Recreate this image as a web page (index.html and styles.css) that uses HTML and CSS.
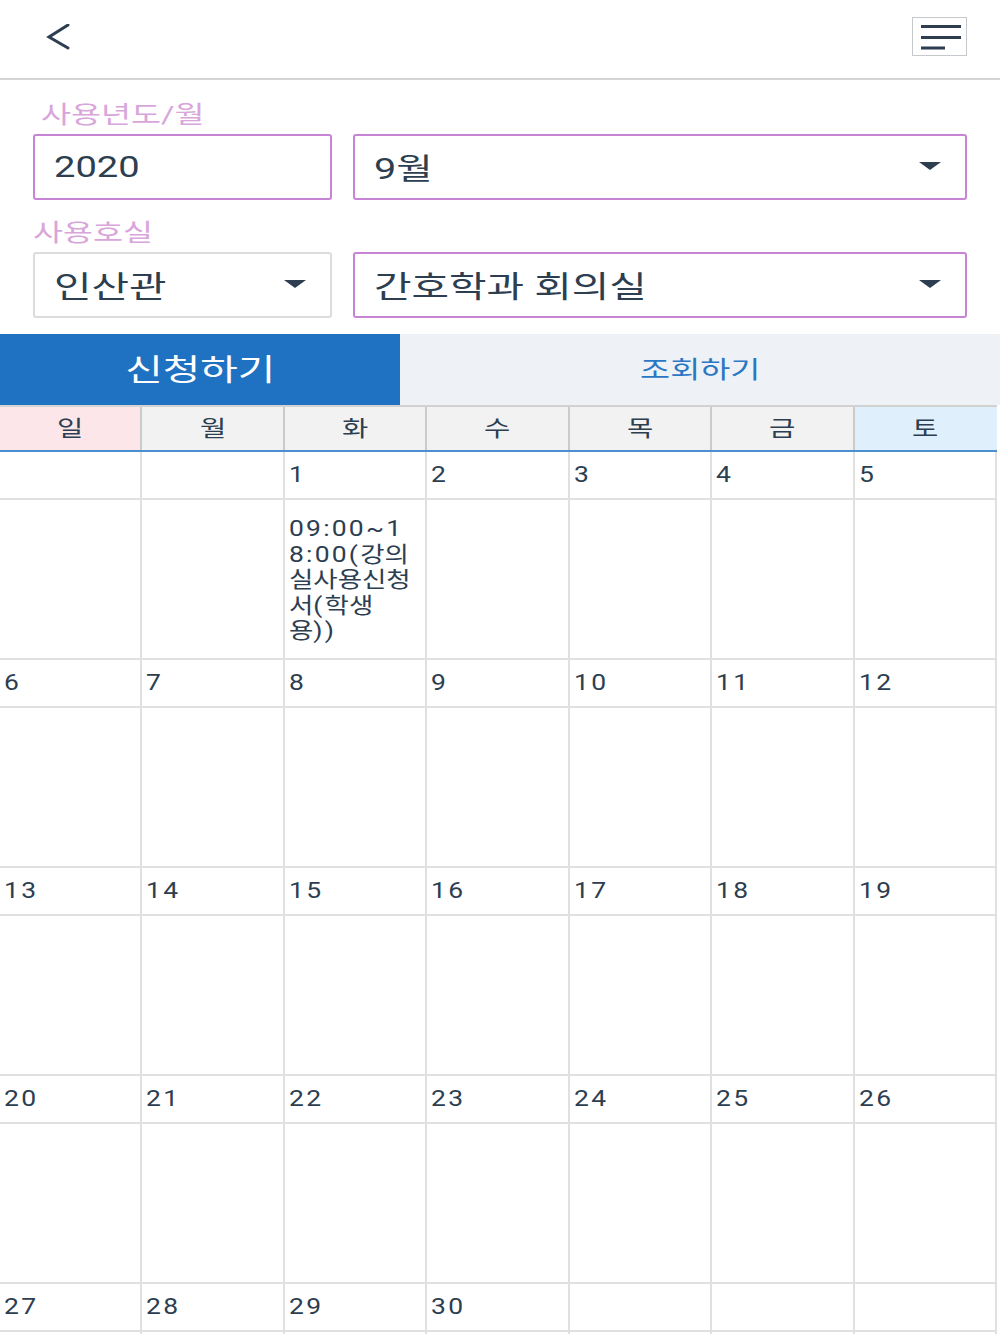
FILE: index.html
```html
<!DOCTYPE html>
<html lang="ko">
<head>
<meta charset="utf-8">
<title>강의실 사용신청</title>
<link rel="stylesheet" href="styles.css">
</head>
<body>
<header class="topbar">
  <button class="back" aria-label="뒤로">
    <svg width="26" height="30" viewBox="0 0 26 30"><path d="M22 1 L3 13 L22 24" fill="none" stroke="#2c3e50" stroke-width="3" stroke-linecap="round" stroke-linejoin="miter"/></svg>
  </button>
  <button class="menu" aria-label="메뉴">
    <svg width="52" height="36" viewBox="0 0 52 36"><path d="M7 7.5 H47 M7 18.5 H47 M7 29 H31" stroke="#2c3e50" stroke-width="3.2"/></svg>
  </button>
</header>

<section class="form">
  <div class="label label-first"><span class="wide">사용년도/월</span></div>
  <div class="row">
    <div class="field purple"><span class="wide num">2020</span></div>
    <div class="field purple select"><span class="wide mixed">9월</span><span class="caret"></span></div>
  </div>
  <div class="label"><span class="wide">사용호실</span></div>
  <div class="row">
    <div class="field grey select"><span class="wide">인산관</span><span class="caret"></span></div>
    <div class="field purple select"><span class="wide">간호학과 회의실</span><span class="caret"></span></div>
  </div>
</section>

<nav class="tabs">
  <div class="tab active"><span class="wide center">신청하기</span></div>
  <div class="tab"><span class="wide center">조회하기</span></div>
</nav>

<div class="calendar">
  <div class="days">
    <div class="day sun"><span class="wide center">일</span></div>
    <div class="day"><span class="wide center">월</span></div>
    <div class="day"><span class="wide center">화</span></div>
    <div class="day"><span class="wide center">수</span></div>
    <div class="day"><span class="wide center">목</span></div>
    <div class="day"><span class="wide center">금</span></div>
    <div class="day sat"><span class="wide center">토</span></div>
  </div>

  <div class="week">
    <div class="date"></div><div class="date"></div><div class="date"><span class="wide num">1</span></div><div class="date"><span class="wide num">2</span></div><div class="date"><span class="wide num">3</span></div><div class="date"><span class="wide num">4</span></div><div class="date"><span class="wide num">5</span></div>
    <div class="slot"></div><div class="slot"></div>
    <div class="slot"><div class="event"><span class="lat">09:00~1</span><br><span class="lat">8:00(</span>강의<br>실사용신청<br>서<span class="lat">(</span>학생<br>용<span class="lat">))</span></div></div>
    <div class="slot"></div><div class="slot"></div><div class="slot"></div><div class="slot"></div>
  </div>

  <div class="week">
    <div class="date"><span class="wide num">6</span></div><div class="date"><span class="wide num">7</span></div><div class="date"><span class="wide num">8</span></div><div class="date"><span class="wide num">9</span></div><div class="date"><span class="wide num">10</span></div><div class="date"><span class="wide num">11</span></div><div class="date"><span class="wide num">12</span></div>
    <div class="slot"></div><div class="slot"></div><div class="slot"></div><div class="slot"></div><div class="slot"></div><div class="slot"></div><div class="slot"></div>
  </div>

  <div class="week">
    <div class="date"><span class="wide num">13</span></div><div class="date"><span class="wide num">14</span></div><div class="date"><span class="wide num">15</span></div><div class="date"><span class="wide num">16</span></div><div class="date"><span class="wide num">17</span></div><div class="date"><span class="wide num">18</span></div><div class="date"><span class="wide num">19</span></div>
    <div class="slot"></div><div class="slot"></div><div class="slot"></div><div class="slot"></div><div class="slot"></div><div class="slot"></div><div class="slot"></div>
  </div>

  <div class="week">
    <div class="date"><span class="wide num">20</span></div><div class="date"><span class="wide num">21</span></div><div class="date"><span class="wide num">22</span></div><div class="date"><span class="wide num">23</span></div><div class="date"><span class="wide num">24</span></div><div class="date"><span class="wide num">25</span></div><div class="date"><span class="wide num">26</span></div>
    <div class="slot"></div><div class="slot"></div><div class="slot"></div><div class="slot"></div><div class="slot"></div><div class="slot"></div><div class="slot"></div>
  </div>

  <div class="week">
    <div class="date"><span class="wide num">27</span></div><div class="date"><span class="wide num">28</span></div><div class="date"><span class="wide num">29</span></div><div class="date"><span class="wide num">30</span></div><div class="date"></div><div class="date"></div><div class="date"></div>
    <div class="slot"></div><div class="slot"></div><div class="slot"></div><div class="slot"></div><div class="slot"></div><div class="slot"></div><div class="slot"></div>
  </div>
</div>
</body>
</html>
```

FILE: styles.css
```css
html, body {
  margin: 0;
  padding: 0;
  background: #ffffff;
}

body {
  width: 1000px;
  height: 1334px;
  overflow: hidden;
  font-family: Roboto, "Noto Sans CJK KR", sans-serif;
  color: #2c3e50;
}

/* the screen's type is drawn wide (stretched horizontally) */
.wide {
  display: inline-block;
  white-space: pre;
  transform: scaleX(1.36);
  transform-origin: 0 50%;
}

.wide.num {
  transform: scaleX(1.27);
}

.wide.mixed {
  transform: scaleX(1.32);
}

.wide.center {
  transform-origin: 50% 50%;
}

/* top bar */
.topbar {
  height: 78px;
  border-bottom: 2px solid #d4d4d4;
  display: flex;
  justify-content: space-between;
  align-items: flex-start;
  padding: 0 33px 0 46px;
}

.back,
.menu {
  background: none;
  border: none;
  padding: 0;
  margin: 0;
  cursor: pointer;
}

.back {
  margin-top: 24px;
  width: 26px;
  height: 30px;
}

.back svg,
.menu svg {
  display: block;
}

.menu {
  margin-top: 17px;
  width: 55px;
  height: 39px;
  border: 1.5px solid #c6c9cc;
  box-sizing: border-box;
  display: flex;
  align-items: center;
  justify-content: center;
}

/* form */
.form {
  padding: 20px 33px 0 33px;
}

.label {
  font-size: 24px;
  line-height: 30px;
  color: #d8a6da;
  margin-bottom: 4px;
}

.label-first {
  padding-left: 8px;
}

.row {
  display: grid;
  grid-template-columns: 299px 1fr;
  column-gap: 21px;
  margin-bottom: 18px;
}

.row:last-child {
  margin-bottom: 16px;
}

.field {
  height: 66px;
  box-sizing: border-box;
  border: 2px solid #c784d4;
  border-radius: 3px;
  display: flex;
  align-items: center;
  padding: 0 24px 2px 19px;
  font-size: 30px;
  color: #2c3e50;
}

.field.grey {
  border-color: #dcdcdc;
}

.select .caret {
  margin-left: auto;
  width: 0;
  height: 0;
  border-left: 11px solid transparent;
  border-right: 11px solid transparent;
  border-top: 8px solid #2c3e50;
}

/* tabs */
.tabs {
  display: grid;
  grid-template-columns: 400px 1fr;
  height: 71px;
}

.tab {
  display: flex;
  align-items: center;
  justify-content: center;
  padding-bottom: 5px;
  box-sizing: border-box;
  background: #eef1f6;
  color: #2a77c4;
  font-size: 24px;
}

.tab.active {
  background: #1f72c1;
  color: #ffffff;
  font-size: 30px;
}

/* calendar */
.calendar {
  width: 997px;
  border-top: 2px solid #d2d2d2;
}

.days {
  display: grid;
  grid-template-columns: repeat(7, 1fr);
  border-bottom: 2px solid #4a8fd0;
}

.day {
  height: 43px;
  box-sizing: border-box;
  padding-bottom: 5px;
  border-right: 2px solid #cbcbcb;
  background: #f2f2f2;
  display: flex;
  align-items: center;
  justify-content: center;
  font-size: 22px;
  color: #2c3e50;
}

.day .wide {
  transform: scaleX(1.3);
}

.day.sun {
  background: #fde6ea;
}

.day.sat {
  background: #dfeffb;
  border-right-color: #dfeffb;
}

.week {
  display: grid;
  grid-template-columns: repeat(7, 1fr);
  grid-template-rows: 48px 160px;
}

.date,
.slot {
  box-sizing: border-box;
  border-right: 2px solid #e0e0e0;
  border-bottom: 2px solid #e0e0e0;
}

.date {
  padding-left: 4px;
  font-size: 21.5px;
  line-height: 46px;
  color: #2c3e50;
}

.date .wide.num {
  letter-spacing: 2px;
  transform: scaleX(1.23);
}

.slot {
  padding: 16px 0 0 4px;
}

.event {
  width: 110px;
  white-space: nowrap;
  font-size: 21.5px;
  line-height: 25.5px;
  transform: scaleX(1.23);
  transform-origin: 0 0;
  color: #2c3e50;
}

.event .lat {
  letter-spacing: 1.8px;
}
```
